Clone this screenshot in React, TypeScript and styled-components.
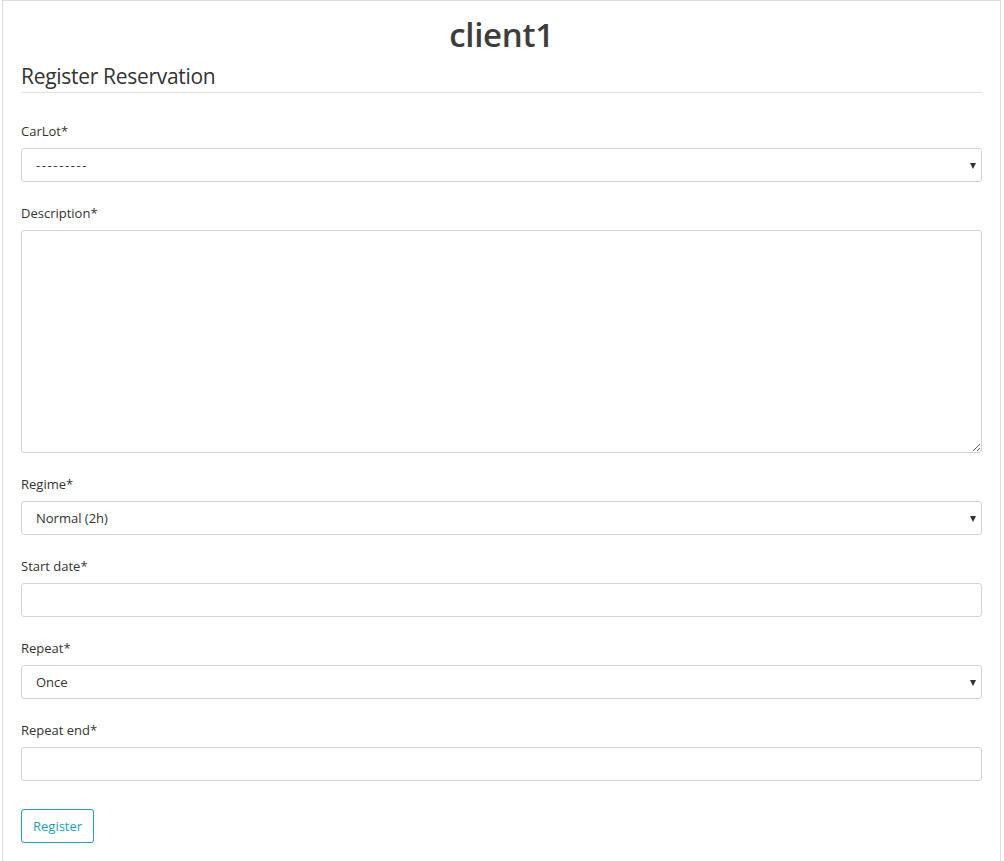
import React from "react";
import styled, { createGlobalStyle } from "styled-components";

const Global = createGlobalStyle`
  html, body { margin: 0; padding: 0; background: #fff; }
  body { font-family: "Open Sans", "Noto Sans", sans-serif; color: #212529; }
  * { box-sizing: border-box; }
`;

const Card = styled.div`
  margin: 0 3px 0 2px;
  border: 1px solid #dcdcdc;
  border-bottom: none;
  padding: 12px 18px 17px 18px;
  min-height: 861px;
`;

const Title = styled.h1`
  margin: 0;
  text-align: center;
  font-size: 33px;
  font-weight: 600;
  line-height: 44px;
  color: #3d3d3d;
  letter-spacing: -0.3px;
`;

const Subtitle = styled.h4`
  margin: 4px 0 0 0;
  font-size: 21px;
  font-weight: 400;
  line-height: 30px;
  color: #333;
  padding-bottom: 1px;
  border-bottom: 1px solid #dfdfdf;
  letter-spacing: -0.3px;
`;

const Form = styled.form`
  margin-top: 28px;
  display: flex;
  flex-direction: column;
`;

const Group = styled.div`
  margin-bottom: 21px;
  display: flex;
  flex-direction: column;
`;

const Label = styled.label`
  font-size: 13px;
  line-height: 21px;
  margin-bottom: 6px;
  color: #333;
`;

const fieldBase = `
  width: 100%;
  border: 1px solid #ced4da;
  border-radius: 3px;
  background: #fff;
  font-family: "Open Sans", "Noto Sans", sans-serif;
  font-size: 13px;
  color: #333;
  padding: 0 14px;
`;

const SelectWrap = styled.div<{ $spaced?: boolean }>`
  position: relative;
  ${fieldBase}
  height: 34px;
  display: flex;
  align-items: center;
  letter-spacing: ${(p) => (p.$spaced ? "1.6px" : "normal")};
`;

const Arrow = styled.span`
  position: absolute;
  right: 5px;
  top: 14px;
  width: 0;
  height: 0;
  border-left: 3.5px solid transparent;
  border-right: 3.5px solid transparent;
  border-top: 6px solid #333;
`;

const Input = styled.input`
  ${fieldBase}
  height: 34px;
  outline: none;
`;

const TextArea = styled.textarea`
  ${fieldBase}
  height: 223px;
  resize: vertical;
  padding: 6px 13px;
  display: block;
  outline: none;
`;

const Button = styled.button`
  align-self: flex-start;
  margin-top: 7px;
  height: 34px;
  padding: 0 11px;
  border: 1px solid #17a2b8;
  border-radius: 3px;
  background: #fff;
  color: #17a2b8;
  font-family: "Open Sans", "Noto Sans", sans-serif;
  font-size: 13px;
`;

const Select: React.FC<{ value: string; spaced?: boolean }> = ({ value, spaced }) => (
  <SelectWrap $spaced={spaced}>
    {value}
    <Arrow />
  </SelectWrap>
);

export default function App() {
  return (
    <>
      <Global />
      <Card>
        <Title>client1</Title>
        <Subtitle>Register Reservation</Subtitle>
        <Form onSubmit={(e) => e.preventDefault()}>
          <Group>
            <Label>CarLot*</Label>
            <Select value="---------" spaced />
          </Group>
          <Group>
            <Label>Description*</Label>
            <TextArea />
          </Group>
          <Group>
            <Label>Regime*</Label>
            <Select value="Normal (2h)" />
          </Group>
          <Group>
            <Label>Start date*</Label>
            <Input />
          </Group>
          <Group>
            <Label>Repeat*</Label>
            <Select value="Once" />
          </Group>
          <Group>
            <Label>Repeat end*</Label>
            <Input />
          </Group>
          <Button type="submit">Register</Button>
        </Form>
      </Card>
    </>
  );
}
